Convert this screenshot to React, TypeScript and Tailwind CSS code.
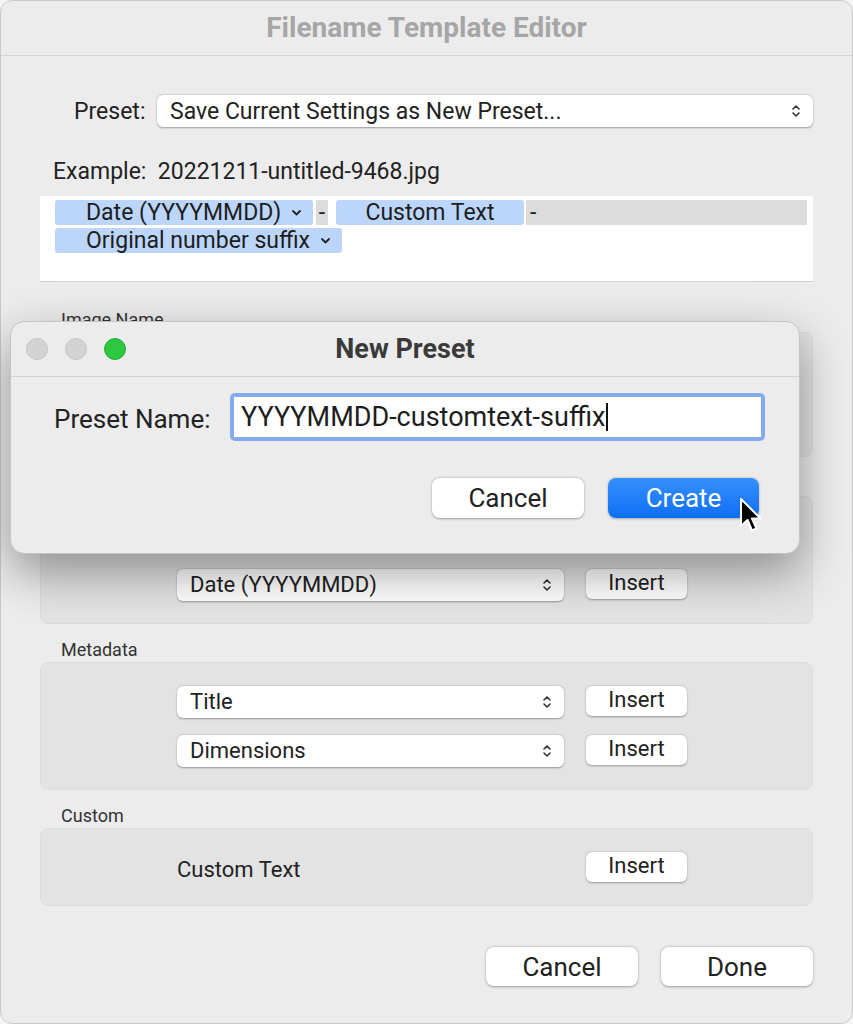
import React from 'react'

const UpDown = () => (
  <svg width="10" height="16" viewBox="0 0 10 16" className="shrink-0">
    <path d="M2 6 L5 3 L8 6 M2 10 L5 13 L8 10" fill="none" stroke="#333" strokeWidth="1.6" strokeLinecap="round" strokeLinejoin="round" />
  </svg>
)

const ChevDown = () => (
  <svg width="11" height="8" viewBox="0 0 11 8" className="shrink-0">
    <path d="M2 2 L5.5 5.5 L9 2" fill="none" stroke="#222" strokeWidth="1.8" strokeLinecap="round" strokeLinejoin="round" />
  </svg>
)

const Select: React.FC<{ label: string; className?: string; textClass?: string }> = ({ label, className = '', textClass = 'text-[22px]' }) => (
  <div className={`flex items-center justify-between h-[32px] rounded-[6px] bg-white pl-[13px] pr-[12px] shadow-[0_0.5px_2px_rgba(0,0,0,0.35)] text-[#222] leading-none ${textClass} ${className}`}>
    <span>{label}</span>
    <UpDown />
  </div>
)

const Insert: React.FC<{ label?: string }> = ({ label = 'Insert' }) => (
  <div className="w-[101px] h-[30px] rounded-[6px] bg-white shadow-[0_0.5px_2px_rgba(0,0,0,0.35)] flex items-center justify-center text-[22px] text-[#222] leading-none pb-[3px]">
    {label}
  </div>
)

// rows hidden under the sheet carry no text
const Row: React.FC<{ label: string; hidden?: boolean }> = ({ label, hidden = false }) => (
  <div className="flex items-start gap-[22px] pl-[136px]">
    <Select label={hidden ? '' : label} className="w-[387px]" />
    <Insert label={hidden ? '' : 'Insert'} />
  </div>
)

const Group: React.FC<{ title: string; className: string; children?: React.ReactNode }> = ({ title, className, children }) => (
  <div className={className}>
    <div className="h-[20px] leading-[20px] text-[18px] text-[#333] pl-[21px]">{title}</div>
    <div className="mt-[2px] rounded-[8px] bg-[#e3e3e3] border border-[#dcdcdc] flex flex-col">{children}</div>
  </div>
)

const MacButton: React.FC<{ label: string; className?: string }> = ({ label, className = '' }) => (
  <div className={`w-[152px] h-[39px] rounded-[8px] bg-white shadow-[0_0.5px_2.5px_rgba(0,0,0,0.35)] flex items-center justify-center text-[26px] leading-none text-[#222] ${className}`}>
    {label}
  </div>
)

const Chip: React.FC<{ children: React.ReactNode; className?: string }> = ({ children, className = '' }) => (
  <div className={`h-[25px] rounded-[3px] bg-[#bcd6fb] flex items-center text-[23px] leading-none text-[#1d1d1d] ${className}`}>{children}</div>
)

export default function App() {
  return (
    <div className="relative w-[853px] h-[1024px] bg-[#f4f4f4] font-['Roboto',sans-serif] overflow-hidden">
      <div className="h-full rounded-[12px] bg-[#ececec] border border-[#c9c9c9] flex flex-col overflow-hidden">
        <div className="h-[55px] shrink-0 border-b border-[#d4d4d4] flex items-center justify-center">
          <span className="text-[28px] leading-none font-bold text-[#a6a6a6]">Filename Template Editor</span>
        </div>

        <div className="px-[39px] flex flex-col">
          <div className="mt-[39px] flex items-center pl-[34px]">
            <span className="text-[23px] leading-none text-[#222] w-[83px]">Preset:</span>
            <Select label="Save Current Settings as New Preset..." className="flex-1" textClass="text-[23px]" />
          </div>

          <div className="mt-[33px] pl-[13px] h-[24px] leading-[24px] text-[23px] text-[#222]">
            Example:&nbsp; 20221211-untitled-9468.jpg
          </div>

          <div className="mt-[12px] h-[86px] bg-white border-b border-[#cfcfcf] pl-[15px] pr-[6px] pt-[4px] flex flex-col gap-[3px]">
            <div className="flex items-center">
              <Chip className="w-[258px] pl-[31px] gap-[10px]">
                <span>Date (YYYYMMDD)</span>
                <ChevDown />
              </Chip>
              <div className="ml-[3px] w-[12px] h-[25px] bg-[#dcdcdc] flex items-center justify-center text-[23px] leading-none text-[#222]">-</div>
              <Chip className="ml-[8px] w-[188px] justify-center">Custom Text</Chip>
              <div className="ml-[2px] flex-1 h-[25px] bg-[#dcdcdc] flex items-center pl-[4px] text-[23px] leading-none text-[#222]">-</div>
            </div>
            <div className="flex">
              <Chip className="w-[287px] pl-[31px] gap-[10px]">
                <span>Original number suffix</span>
                <ChevDown />
              </Chip>
            </div>
          </div>

          <Group title="Image Name" className="mt-[28px]">
            <div className="h-[123px] flex flex-col gap-[17px] pt-[23px]">
              <Row label="Filename" hidden />
              <Row label="Folder Name" hidden />
            </div>
          </Group>

          <Group title="" className="mt-[17px]">
            <div className="h-[126px] flex flex-col gap-[17px] pt-[23px]">
              <Row label="Image # (1)" hidden />
              <Row label="Date (YYYYMMDD)" />
            </div>
          </Group>

          <Group title="Metadata" className="mt-[16px]">
            <div className="h-[126px] flex flex-col gap-[17px] pt-[23px]">
              <Row label="Title" />
              <Row label="Dimensions" />
            </div>
          </Group>

          <Group title="Custom" className="mt-[16px]">
            <div className="h-[76px] flex items-center pl-[136px]">
              <span className="w-[409px] text-[22px] leading-none text-[#222] pt-[6px]">Custom Text</span>
              <Insert />
            </div>
          </Group>

          <div className="mt-[41px] flex justify-end gap-[23px]">
            <MacButton label="Cancel" />
            <MacButton label="Done" />
          </div>
        </div>
      </div>

      {/* sheet dialog */}
      <div className="absolute left-[10px] top-[321px] w-[790px] h-[233px] rounded-[14px] bg-[#ececec] border border-[#c4c4c4] shadow-[0_18px_48px_rgba(0,0,0,0.38)] flex flex-col overflow-hidden">
        <div className="relative h-[55px] shrink-0 border-b border-[#d2d2d2] flex items-center justify-center">
          <div className="absolute left-[15px] top-[16px] flex gap-[17px]">
            <div className="w-[22px] h-[22px] rounded-full bg-[#d3d3d3] border border-[#c6c6c6]" />
            <div className="w-[22px] h-[22px] rounded-full bg-[#d3d3d3] border border-[#c6c6c6]" />
            <div className="w-[22px] h-[22px] rounded-full bg-[#2bc840] border border-[#24ad36]" />
          </div>
          <span className="text-[27px] leading-none font-bold text-[#3a3a3a]">New Preset</span>
        </div>
        <div className="flex items-center mt-[16px] pl-[43px]">
          <span className="text-[26px] leading-none text-[#222] w-[176px] pt-[3px]">Preset Name:</span>
          <div className="w-[535px] h-[48px] rounded-[5px] bg-[#84aaf0] p-[4px]">
            <div className="h-full bg-white flex items-center pl-[7px] text-[27px] leading-none text-[#1d1d1d]">
              <span>YYYYMMDD-customtext-suffix</span>
              <span className="w-[1.5px] h-[28px] bg-[#111] ml-[1px]" />
            </div>
          </div>
        </div>
        <div className="flex justify-end gap-[24px] pr-[40px] mt-[37px]">
          <div className="w-[152px] h-[40px] rounded-[8px] bg-white shadow-[0_0.5px_2.5px_rgba(0,0,0,0.35)] flex items-center justify-center text-[26px] leading-none text-[#222]">Cancel</div>
          <div className="w-[151px] h-[40px] rounded-[8px] bg-gradient-to-b from-[#3590fd] to-[#0c6ef4] shadow-[0_0.5px_2.5px_rgba(0,0,0,0.3)] flex items-center justify-center text-[26px] leading-none text-white">Create</div>
        </div>
      </div>

      {/* mouse pointer */}
      <svg className="absolute left-[739px] top-[497px]" width="24" height="38" viewBox="0 0 24 38">
        <path d="M2 2 L2 29 L8.5 23 L13 33.5 L17.5 31.5 L13 21.5 L21.5 21.5 Z" fill="#000" stroke="#fff" strokeWidth="2" strokeLinejoin="round" />
      </svg>
    </div>
  )
}
